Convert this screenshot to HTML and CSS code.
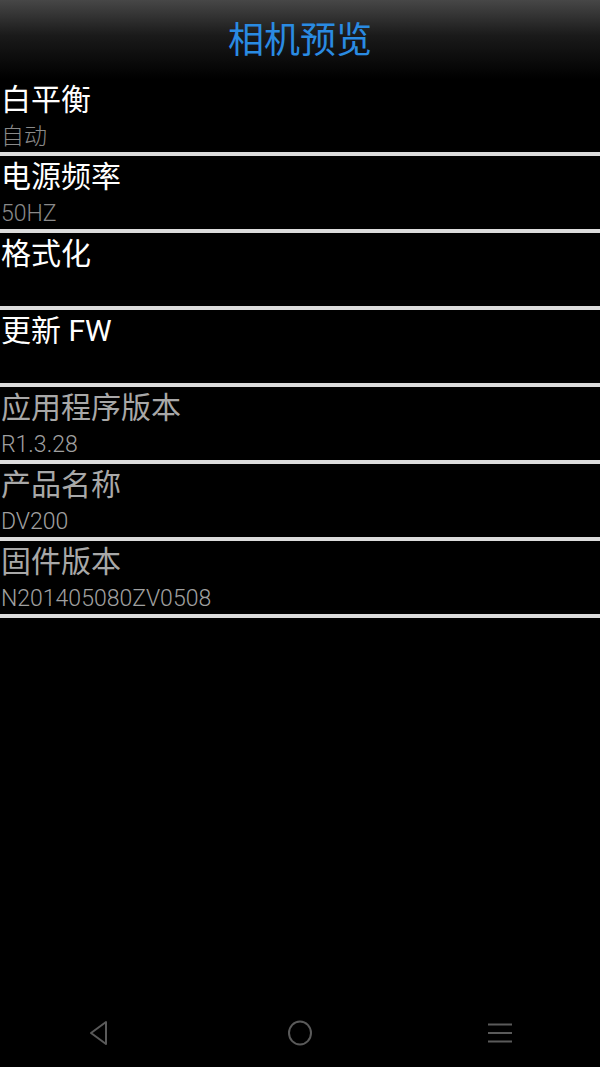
FILE: index.html
```html
<!DOCTYPE html>
<html>
<head>
<meta charset="utf-8">
<link rel="stylesheet" href="styles.css">
</head>
<body>
<div class="screen">
  <header class="header"><h1 class="title">相机预览</h1></header>
  <ul class="list">
    <li class="row"><div class="row-title">白平衡</div><div class="row-sub">自动</div></li>
    <li class="row"><div class="row-title">电源频率</div><div class="row-sub">50HZ</div></li>
    <li class="row"><div class="row-title">格式化</div><div class="row-sub"></div></li>
    <li class="row"><div class="row-title">更新 FW</div><div class="row-sub"></div></li>
    <li class="row disabled"><div class="row-title">应用程序版本</div><div class="row-sub">R1.3.28</div></li>
    <li class="row disabled"><div class="row-title">产品名称</div><div class="row-sub">DV200</div></li>
    <li class="row disabled"><div class="row-title">固件版本</div><div class="row-sub">N201405080ZV0508</div></li>
  </ul>
  <div class="spacer"></div>
  <nav class="navbar">
    <svg class="nav-icon" width="30" height="30" viewBox="0 0 30 30"><path d="M21 4 L21 26 L6 15 Z" fill="none" stroke="#5a5a5a" stroke-width="2" stroke-linejoin="round"/></svg>
    <svg class="nav-icon" width="30" height="30" viewBox="0 0 30 30"><ellipse cx="15" cy="15" rx="11" ry="11.5" fill="none" stroke="#5a5a5a" stroke-width="2"/></svg>
    <svg class="nav-icon" width="30" height="30" viewBox="0 0 30 30"><path d="M3 6.5 H27 M3 15 H27 M3 23.5 H27" stroke="#5a5a5a" stroke-width="2.2"/></svg>
  </nav>
</div>
</body>
</html>
```
FILE: styles.css
```css
* { box-sizing: border-box; }
html, body { margin: 0; padding: 0; background: #000; }
body { font-family: Roboto, "Noto Sans CJK SC", sans-serif; }
.screen { width: 600px; height: 1067px; display: flex; flex-direction: column; background: #000; }
.header {
  height: 79px;
  background: linear-gradient(to bottom, #474747 0%, #1a1a1a 45%, #000 100%);
  display: flex; align-items: center; justify-content: center;
}
.title { margin: 0; font-weight: 400; font-size: 36px; color: #2a8be2; line-height: 1; padding-top: 2px; }
.list { list-style: none; margin: 0; padding: 0; }
.row {
  height: 77px;
  border-bottom: 4px solid #dcdcdc;
  padding: 2px 0 0 1px;
  display: flex; flex-direction: column;
}
.row-title { font-size: 30px; line-height: 38px; color: #fff; }
.row-sub { font-size: 23px; line-height: 30px; margin-top: 3px; color: #8a8a8a; font-weight: 300; }
.disabled .row-title { color: #a8a8a8; }
.disabled .row-sub { color: #a0a0a0; }
.spacer { flex: 1; }
.navbar { height: 67px; display: flex; justify-content: space-around; align-items: center; padding: 0 0 2px; }
.nav-icon { display: block; }
```
